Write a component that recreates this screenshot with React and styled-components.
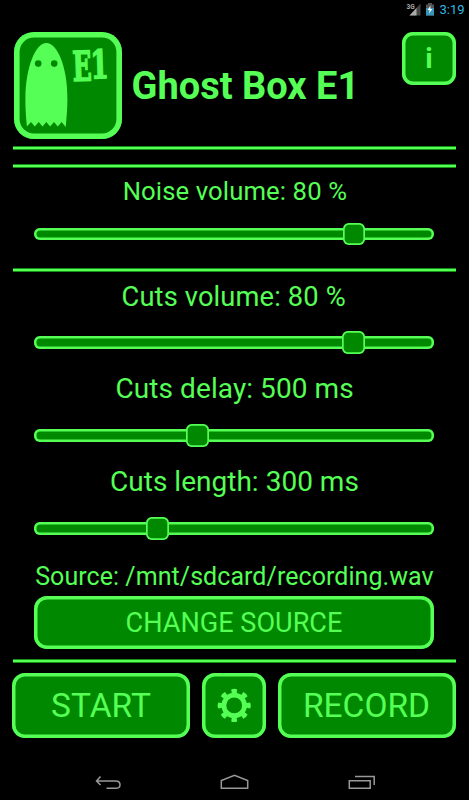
import React from "react";
import styled, { createGlobalStyle } from "styled-components";

const GREEN = "#55ff55";
const DARK = "#008800";

const Global = createGlobalStyle`
  body { margin: 0; background: #000; }
  * { box-sizing: border-box; }
`;
const Screen = styled.main`
  width: 469px; height: 800px; background: #000; color: ${GREEN};
  font-family: Roboto, "Liberation Sans", sans-serif;
  display: flex; flex-direction: column; overflow: hidden;
`;
const StatusBar = styled.div`
  height: 20px; flex: none; padding-right: 4.5px;
  display: flex; justify-content: flex-end; align-items: flex-start;
`;
const StatusIcons = styled.svg`display: block; width: 34px; height: 20px; margin-right: 4px;`;
const Clock = styled.span`
  color: #33b5e5; font-size: 13px; line-height: 19px; white-space: nowrap;
`;
const Header = styled.header`
  height: 126px; flex: none; padding: 12px 13px 0 14px;
  display: flex; align-items: flex-start;
`;
const Logo = styled.div`
  width: 107.5px; height: 107px; flex: none; border-radius: 20px;
  background: ${DARK}; box-shadow: inset 0 0 0 5.6px ${GREEN};
`;
const Drawing = styled.svg`display: block; width: 100%; height: 100%; overflow: visible;`;
const Title = styled.h1`
  margin: 32px 0 0 10px; flex: 1; font-size: 38px; line-height: 44px; font-weight: 700;
  white-space: nowrap;
`;
const Button = styled.button`
  width: ${(p) => p.$w}px; height: ${(p) => p.$h}px; flex: none;
  border: 0; padding: 0; margin: 0; border-radius: ${(p) => p.$r || 13}px;
  background: ${DARK}; box-shadow: inset 0 0 0 3.5px ${GREEN};
  color: ${GREEN}; font-family: inherit; font-size: ${(p) => p.$size}px;
  font-weight: ${(p) => p.$weight || 400};
  display: flex; align-items: center; justify-content: center;
`;
const Rule = styled.hr`
  width: 443px; height: 4px; flex: none; border: 0; margin: ${(p) => p.$gap || 0}px 0 0 13px;
  background: linear-gradient(#149014 1px, ${GREEN} 1px 3px, #149014 3px);
`;
const Label = styled.div`
  height: 32px; flex: none; margin-top: ${(p) => p.$gap}px; line-height: 32px;
  font-size: ${(p) => p.$size}px; letter-spacing: ${(p) => p.$track || 0}px;
  white-space: nowrap; padding-left: ${(p) => p.$left}px;
`;
const Slider = styled.div`
  width: 400px; height: ${(p) => p.$thumb}px; flex: none; margin: ${(p) => p.$gap}px 0 0 34px;
  display: flex; align-items: center; position: relative;
`;
const Track = styled.div`
  width: 100%; height: ${(p) => p.$h}px; border-radius: 6px; background: ${DARK};
  box-shadow: inset 0 0 0 2.5px ${GREEN};
`;
const Thumb = styled.div`
  position: absolute; top: 0; width: ${(p) => p.$size}px; height: ${(p) => p.$size}px;
  border-radius: 6px; background: ${DARK}; box-shadow: inset 0 0 0 1.7px ${GREEN};
`;
const SourceRow = styled.div`padding-left: 34px; margin-top: 3px; flex: none;`;
const Actions = styled.div`
  display: flex; gap: 11.5px; margin-top: 10px; padding-left: 12px; flex: none;
`;
const NavBar = styled.nav`
  height: 48px; margin-top: auto; flex: none;
`;

function LogoArt() {
  return (
    <Drawing viewBox="14 32 107.5 107">
      <path fill={GREEN} d="M46.3 43C57 43 67.6 66 67.4 99C67.3 110 66.6 118 65.7 127L61.6 122L57.8 126.5L54 122L50.1 126.5L46.3 122L42.5 126.5L38.7 122L34.8 126.5L31 122L26.9 126.5C26 117 25.3 109 25.4 99C25.6 66 36 43 46.3 43Z" />
      <circle cx="38.2" cy="63.6" r="3.3" fill={DARK} />
      <circle cx="54.2" cy="63.6" r="3.3" fill={DARK} />
      <g fill={GREEN} stroke={GREEN} strokeWidth="1.6" fontFamily='"DejaVu Serif", serif' fontWeight="700">
        <text transform="translate(73 81) rotate(-2) scale(.61 1)" fontSize="41">E</text>
        <text transform="translate(91 78.5) rotate(-2) scale(.66 1)" fontSize="39">1</text>
      </g>
    </Drawing>
  );
}

function Gear() {
  return (
    <Drawing viewBox="0 0 64.500 65">
      <g transform="translate(32.2 32.4)">
        <circle r="10.3" fill="none" stroke={GREEN} strokeWidth="4.8" />
        {[0, 45, 90, 135, 180, 225, 270, 315].map((a) => (
          <path key={a} transform={`rotate(${a})`} fill={GREEN} d="M-2.2 -11L-3 -16Q0 -17.2 3 -16L2.2 -11Z" />
        ))}
      </g>
    </Drawing>
  );
}

function Range({ gap, thumb, track, left }) {
  return (
    <Slider $gap={gap} $thumb={thumb}>
      <Track $h={track} />
      <Thumb $size={thumb} style={{ left }} />
    </Slider>
  );
}

export default function App() {
  return (
    <Screen>
      <Global />
      <StatusBar>
        <StatusIcons viewBox="402 0 34 20">
          <text x="407.5" y="8.5" fontSize="6.5" fill="#aaa" fontFamily="Roboto" fontWeight="700">3G</text>
          <path d="M421.5 3.5V15.5H410.5Z" fill="#444" />
          <path d="M417.5 8V15.5H410.5Z" fill="#aaa" />
          <path d="M429 3h4v1.5h2V15.5H427V4.5h2Z" fill="#555" />
          <path d="M427 8h8v7.5h-8Z" fill="#3796b8" />
          <path d="M431.5 5.5L428.7 10H430.7L430 13.5L433.3 9H431.3Z" fill="#fff" />
        </StatusIcons>
        <Clock>3:19</Clock>
      </StatusBar>
      <Header>
        <Logo><LogoArt /></Logo>
        <Title>Ghost Box E1</Title>
        <Button $w={54} $h={53} $size={28} $weight={700} $r={11}>i</Button>
      </Header>
      <Rule />
      <Rule $gap={14} />
      <Label $gap={7} $size={25.7} $left={122.7} $track={0.1}>Noise volume: 80 %</Label>
      <Range gap={16} thumb={22} track={12} left={309} />
      <Rule $gap={23} />
      <Label $gap={9} $size={27.3} $left={121.5} $track={0.13}>Cuts volume: 80 %</Label>
      <Range gap={18} thumb={23} track={13} left={308} />
      <Label $gap={19} $size={28} $left={115.5} $track={0.08}>Cuts delay: 500 ms</Label>
      <Range gap={19} thumb={23} track={13} left={152} />
      <Label $gap={19} $size={28} $left={110} $track={0.02}>Cuts length: 300 ms</Label>
      <Range gap={19} thumb={23} track={13} left={112} />
      <Label $gap={21} $size={25} $left={35.2} $track={0.055}>Source: /mnt/sdcard/recording.wav</Label>
      <SourceRow><Button $w={400} $h={53} $size={27.1}>CHANGE SOURCE</Button></SourceRow>
      <Rule $gap={10} />
      <Actions>
        <Button $w={178} $h={65} $size={33.5}>START</Button>
        <Button $w={64.5} $h={65}><Gear /></Button>
        <Button $w={178} $h={65} $size={33.5}>RECORD</Button>
      </Actions>
      <NavBar>
        <Drawing viewBox="0 752 469 48" fill="none" stroke="#999" strokeWidth="1.5">
          <path d="M100.5 776.5L96.5 781L100.5 785M97 781H115.5Q120 781 120 784.7Q120 788.3 115.5 788.3H106.5" />
          <path d="M221.3 788.2V780.5L234.5 775.3L247.7 780.5V788.2Z" />
          <path d="M349.3 780.8H370.2V788.2H349.3ZM355 776.6H374.2V785" />
        </Drawing>
      </NavBar>
    </Screen>
  );
}
